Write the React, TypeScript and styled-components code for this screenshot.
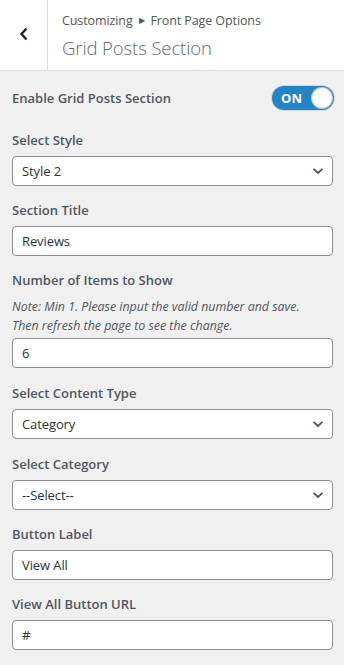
import styled, { createGlobalStyle } from 'styled-components'

const GlobalStyle = createGlobalStyle`
  html, body {
    margin: 0;
    padding: 0;
    background: #f0f0f1;
  }
  body {
    font-family: 'Open Sans', 'Noto Sans', sans-serif;
    color: #50575e;
  }
  * { box-sizing: border-box; }
`

const Panel = styled.div`
  width: 344px;
  height: 665px;
  background: #f0f0f1;
  overflow: hidden;
`

const Header = styled.div`
  display: flex;
  height: 71px;
  background: #fff;
  border-bottom: 1px solid #dcdcde;
`

const BackButton = styled.button`
  width: 48px;
  flex-shrink: 0;
  display: flex;
  align-items: center;
  justify-content: center;
  background: #fff;
  border: 0;
  border-right: 1px solid #dcdcde;
  padding: 0 0 2px 0;
  color: #1d2327;
`

const Titles = styled.div`
  display: flex;
  flex-direction: column;
  padding: 10px 0 0 14px;
`

const Breadcrumb = styled.div`
  font-size: 12.5px;
  line-height: 20px;
  color: #50575e;
  letter-spacing: -0.1px;
`

const Arrow = styled.span`
  font-size: 8px;
  margin: 0 6px 0 6px;
  vertical-align: 2px;
`

const PageTitle = styled.h1`
  margin: 4px 0 0 0;
  font-size: 18.5px;
  font-weight: 300;
  line-height: 26px;
  color: #646970;
  letter-spacing: -0.1px;
`

const Body = styled.div`
  display: flex;
  flex-direction: column;
  padding: 14px 11px 0 12px;
`

const Field = styled.div<{ $gap?: number }>`
  display: flex;
  flex-direction: column;
  margin-bottom: ${(p) => p.$gap ?? 14}px;
`

const ToggleRow = styled.div`
  display: flex;
  align-items: center;
  justify-content: space-between;
  height: 26px;
  margin-bottom: 19px;
`

const Label = styled.label<{ $inline?: boolean }>`
  font-size: 13px;
  font-weight: 600;
  line-height: 20px;
  color: #50575e;
  letter-spacing: 0;
  margin-bottom: ${(p) => (p.$inline ? 0 : 6)}px;
`

const Note = styled.p`
  margin: 1px 0 3px 0;
  font-size: 12.4px;
  font-style: italic;
  line-height: 19px;
  color: #50575e;
  letter-spacing: 0;
`

const Toggle = styled.div`
  position: relative;
  width: 62px;
  height: 24px;
  border-radius: 12px;
  background: #2384c6;
  box-shadow: 0 0 0 1px #d6d6d8;
  display: flex;
  align-items: center;
  padding-left: 9px;
  margin-right: -1px;
`

const ToggleText = styled.span`
  color: #fff;
  font-size: 13px;
  font-weight: 700;
  letter-spacing: 0.2px;
`

const Knob = styled.span`
  position: absolute;
  right: 2px;
  top: 2px;
  width: 20px;
  height: 20px;
  border-radius: 50%;
  background: #fff;
  box-shadow: 0 0 0 1px #b8c9d6;
`

const boxStyles = `
  height: 30px;
  width: 100%;
  background: #fff;
  border: 1px solid #8c8f94;
  border-radius: 4px;
  font-family: 'Open Sans', 'Noto Sans', sans-serif;
  font-size: 13px;
  color: #2c3338;
  padding: 0 8px 0 9px;
  letter-spacing: -0.1px;
`

const TextBox = styled.div`
  ${boxStyles}
  display: flex;
  align-items: center;
`

const SelectBox = styled.div`
  ${boxStyles}
  display: flex;
  align-items: center;
  justify-content: space-between;
  padding-right: 8px;
`

const Chevron = () => (
  <svg width="12" height="8" viewBox="0 0 12 8">
    <path d="M1.5 1.8 L6 6 L10.5 1.8" fill="none" stroke="#50575e" strokeWidth="1.8" />
  </svg>
)

const Select = ({ value }: { value: string }) => (
  <SelectBox>
    <span>{value}</span>
    <Chevron />
  </SelectBox>
)

export default function App() {
  return (
    <Panel>
      <GlobalStyle />
      <Header>
        <BackButton aria-label="Back">
          <svg width="10" height="14" viewBox="0 0 10 14">
            <path d="M7.5 1.5 L2.5 7 L7.5 12.5" fill="none" stroke="#1d2327" strokeWidth="2.4" />
          </svg>
        </BackButton>
        <Titles>
          <Breadcrumb>
            Customizing<Arrow>▶</Arrow>Front Page Options
          </Breadcrumb>
          <PageTitle>Grid Posts Section</PageTitle>
        </Titles>
      </Header>
      <Body>
        <ToggleRow>
          <Label $inline>Enable Grid Posts Section</Label>
          <Toggle>
            <ToggleText>ON</ToggleText>
            <Knob />
          </Toggle>
        </ToggleRow>
        <Field>
          <Label>Select Style</Label>
          <Select value="Style 2" />
        </Field>
        <Field>
          <Label>Section Title</Label>
          <TextBox>Reviews</TextBox>
        </Field>
        <Field $gap={15}>
          <Label>Number of Items to Show</Label>
          <Note>
            Note: Min 1. Please input the valid number and save.
            <br />
            Then refresh the page to see the change.
          </Note>
          <TextBox>6</TextBox>
        </Field>
        <Field $gap={15}>
          <Label>Select Content Type</Label>
          <Select value="Category" />
        </Field>
        <Field>
          <Label>Select Category</Label>
          <Select value="--Select--" />
        </Field>
        <Field>
          <Label>Button Label</Label>
          <TextBox>View All</TextBox>
        </Field>
        <Field>
          <Label>View All Button URL</Label>
          <TextBox>#</TextBox>
        </Field>
      </Body>
    </Panel>
  )
}
